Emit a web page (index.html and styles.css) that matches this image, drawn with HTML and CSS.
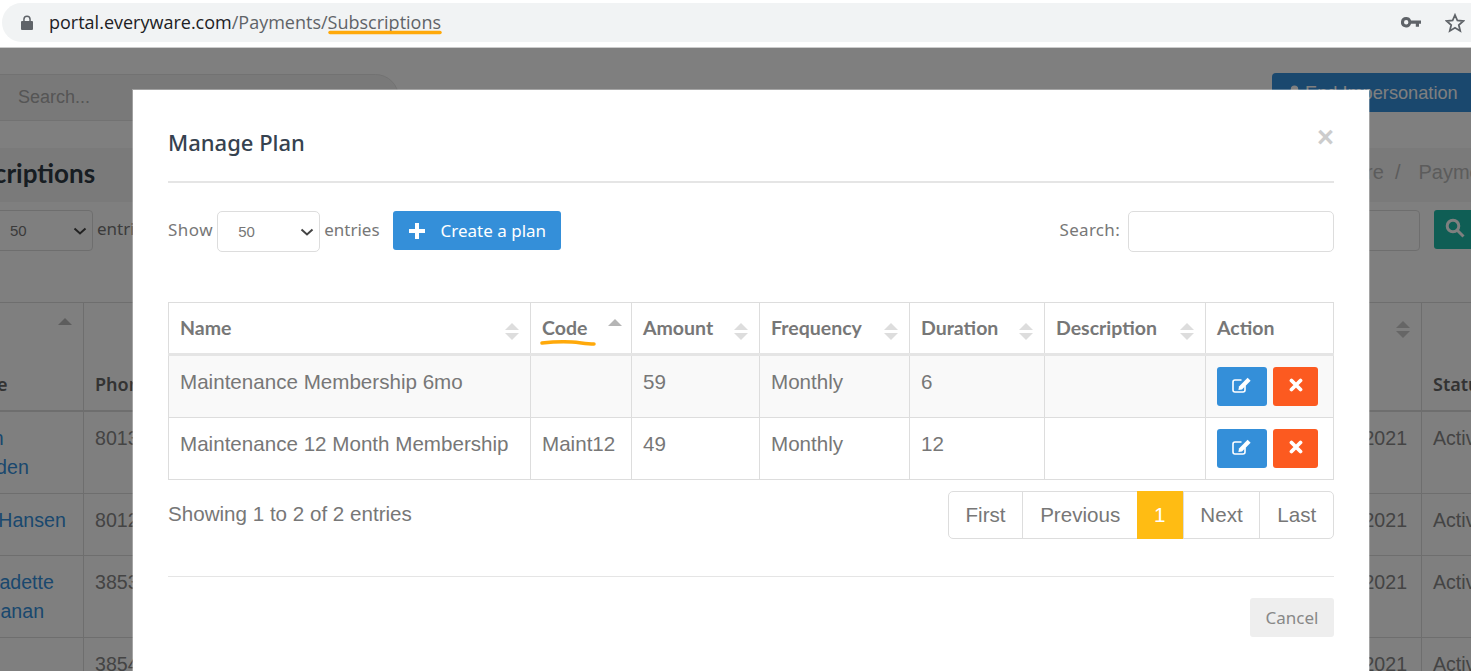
FILE: index.html
```html
<!DOCTYPE html>
<html lang="en">
<head>
    <meta charset="UTF-8">
    <meta name="viewport" content="width=device-width, initial-scale=1.0">
    <title>Manage Plan</title>
    <link rel="stylesheet" href="styles.css">
</head>
<body>
    <!-- Browser address bar -->
    <div class="browser-bar">
        <div class="address">
            <svg class="lock" viewBox="0 0 12 15"><path d="M2.2 6V4.2a3.8 3.8 0 0 1 7.6 0V6H11a1 1 0 0 1 1 1v7a1 1 0 0 1-1 1H1a1 1 0 0 1-1-1V7a1 1 0 0 1 1-1zm1.5 0h4.6V4.2a2.3 2.3 0 0 0-4.6 0z"/></svg>
            <span class="url"><span class="host">portal.everyware.com</span>/Payments/<span class="marked">Subscriptions<svg class="scribble-url" viewBox="0 0 114 5"><path d="M2 2.500h110"/></svg></span></span>
            <div class="address-icons">
                <svg class="key" viewBox="0 0 20 11"><path d="M5.200 0a5.200 5.200 0 0 1 4.900 3.400H20v3.400h-2v3h-3.200v-3h-4.700A5.200 5.200 0 1 1 5.200 0zm0 3a2.200 2.200 0 1 0 0 4.400 2.200 2.200 0 0 0 0-4.400z"/></svg>
                <svg class="star" viewBox="0 0 20 20"><path d="M10 2l2.400 5.500 6 .5-4.600 4 1.400 5.900L10 14.800l-5.200 3.100 1.400-5.900-4.600-4 6-.5z"/></svg>
            </div>
        </div>
    </div>

    <div class="viewport">
        <!-- Page behind the dialog -->
        <div class="page">
            <div class="top-row">
                <div class="site-search">Search...</div>
                <button class="end-imp">
                    <svg class="person" viewBox="0 0 14 16"><circle cx="7" cy="4" r="4"/><path d="M0 16c0-5 3-7 7-7s7 2 7 7z"/></svg>
                    <span>End Impersonation</span>
                </button>
            </div>
            <div class="title-band">
                <h2>Subscriptions</h2>
                <div class="crumbs">Everyware<i>/</i>Payments<i>/</i>Subscriptions</div>
            </div>
            <div class="page-controls">
                <div class="page-length">
                    <div class="select-wrap">
                        <select class="page-select"><option>50</option></select>
                        <svg class="chevron" viewBox="0 0 14 8"><path d="M1.500 1.500L7 6.500l5.500-5"/></svg>
                    </div>
                    <span>entries</span>
                </div>
                <div class="page-search">
                    <div class="page-input"></div>
                    <button class="go">
                        <svg viewBox="0 0 20 20"><circle cx="8" cy="8" r="5.800"/><path d="M12.500 12.500l6 6"/></svg>
                    </button>
                </div>
            </div>
            <table class="subs">
                <colgroup>
                    <col class="c-name"><col class="c-phone"><col class="c-mid"><col class="c-date"><col class="c-status">
                </colgroup>
                <thead>
                    <tr>
                        <th>Name<span class="bg-up"></span></th>
                        <th>Phone</th>
                        <th></th>
                        <th class="bg-both">Date</th>
                        <th>Status</th>
                    </tr>
                </thead>
                <tbody>
                    <tr><td><a>Ryan<br>Madden</a></td><td>8013342210</td><td></td><td>03/12/2021</td><td>Active</td></tr>
                    <tr><td><a>Ann Hansen</a></td><td>8012297614</td><td></td><td>03/18/2021</td><td>Active</td></tr>
                    <tr><td><a>Bernadette<br>McManan</a></td><td>3853401927</td><td></td><td>03/22/2021</td><td>Active</td></tr>
                    <tr><td><a>Liam</a></td><td>3854120068</td><td></td><td>03/29/2021</td><td>Active</td></tr>
                </tbody>
            </table>
        </div>

        <div class="backdrop"></div>

        <!-- Manage Plan dialog -->
        <div class="modal">
            <div class="modal-head">
                <h4>Manage Plan</h4>
                <span class="close">&times;</span>
            </div>
            <div class="tools">
                <span class="show">Show</span>
                <div class="select-wrap length-wrap">
                    <select class="length"><option>50</option></select>
                    <svg class="chevron" viewBox="0 0 14 8"><path d="M1.500 1.500L7 6.500l5.500-5"/></svg>
                </div>
                <span>entries</span>
                <button class="btn-create">
                    <svg viewBox="0 0 16 16"><path d="M6 0h4v6h6v4h-6v6H6v-6H0V6h6z"/></svg>
                    Create a plan
                </button>
                <label class="search">Search:<input type="text"></label>
            </div>
            <table class="plans">
                <colgroup>
                    <col class="p-name"><col class="p-code"><col class="p-amount"><col class="p-freq"><col class="p-dur"><col class="p-desc"><col class="p-act">
                </colgroup>
                <thead>
                    <tr>
                        <th class="sort">Name</th>
                        <th class="sort-up">Code<svg class="scribble-code" viewBox="0 0 56 7"><path d="M2 3c14-1.500 22-1.500 30-1 8 .5 14 2 22 2"/></svg></th>
                        <th class="sort">Amount</th>
                        <th class="sort">Frequency</th>
                        <th class="sort">Duration</th>
                        <th class="sort">Description</th>
                        <th>Action</th>
                    </tr>
                </thead>
                <tbody>
                    <tr class="odd">
                        <td>Maintenance Membership 6mo</td><td></td><td>59</td><td>Monthly</td><td>6</td><td></td>
                        <td class="actions">
                            <button class="btn-edit"><svg viewBox="0 0 20 16"><path class="edit-box" d="M13 8.500V13a2 2 0 0 1-2 2H3a2 2 0 0 1-2-2V5a2 2 0 0 1 2-2h6.500"/><path d="M15.600.800l3 3L10 12.400l-3.600.600.600-3.600z"/></svg></button>
                            <button class="btn-del"><svg viewBox="0 0 14 14"><path d="M2.500 2.500l9 9m0-9l-9 9"/></svg></button>
                        </td>
                    </tr>
                    <tr>
                        <td>Maintenance 12 Month Membership</td><td>Maint12</td><td>49</td><td>Monthly</td><td>12</td><td></td>
                        <td class="actions">
                            <button class="btn-edit"><svg viewBox="0 0 20 16"><path class="edit-box" d="M13 8.500V13a2 2 0 0 1-2 2H3a2 2 0 0 1-2-2V5a2 2 0 0 1 2-2h6.500"/><path d="M15.600.800l3 3L10 12.400l-3.600.600.600-3.600z"/></svg></button>
                            <button class="btn-del"><svg viewBox="0 0 14 14"><path d="M2.500 2.500l9 9m0-9l-9 9"/></svg></button>
                        </td>
                    </tr>
                </tbody>
            </table>
            <div class="table-foot">
                <div class="info">Showing 1 to 2 of 2 entries</div>
                <div class="pager">
                    <a>First</a><a>Previous</a><a class="active">1</a><a>Next</a><a>Last</a>
                </div>
            </div>
            <div class="modal-foot">
                <button class="btn-cancel">Cancel</button>
            </div>
        </div>
    </div>
</body>
</html>
```

FILE: styles.css
```css
html, body {
    margin: 0;
    height: 671px;
    overflow: hidden;
}

body {
    font-family: "Liberation Sans", Arial, sans-serif;
    background-color: white;
    color: #777;
}

button {
    border: none;
    font-family: inherit;
}

/* Browser bar */
.browser-bar {
    height: 48px;
    padding: 3px 0 0 2px;
    box-sizing: border-box;
    background-color: white;
    border-bottom: 1px solid #ccc;
}

.address {
    display: flex;
    align-items: center;
    height: 39px;
    padding-left: 19px;
    background-color: #f1f3f4;
    border-radius: 20px 0 0 20px;
}

.lock {
    width: 12px;
    height: 15px;
    fill: #5f6368;
}

.url {
    margin: -2px 0 0 16px;
    font-family: "Open Sans", sans-serif;
    font-size: 18px;
    color: #5f6368;
}

.host {
    color: #202124;
}

.marked {
    position: relative;
}

.scribble-url {
    position: absolute;
    left: 0;
    top: 20px;
    width: 114px;
    height: 5px;
}

.scribble-url path, .scribble-code path {
    fill: none;
    stroke: #ffa90a;
    stroke-width: 3.500;
    stroke-linecap: round;
}

.address-icons {
    display: flex;
    align-items: center;
    gap: 24px;
    margin-left: auto;
    padding-right: 6px;
}

.key {
    width: 20px;
    height: 11px;
    fill: #5f6368;
}

.star {
    width: 20px;
    height: 20px;
    fill: none;
    stroke: #5f6368;
    stroke-width: 1.800;
}

/* Page behind the dialog */
.viewport {
    position: relative;
    height: 623px;
    overflow: hidden;
}

.page {
    width: 1800px;
    margin-left: -100px;
    background-color: white;
}

.top-row {
    display: flex;
    justify-content: space-between;
    align-items: flex-start;
    height: 100px;
    box-sizing: border-box;
    padding-top: 26px;
}

.site-search {
    width: 480px;
    height: 47px;
    margin-left: 19px;
    padding-left: 98px;
    box-sizing: border-box;
    background-color: #f3f3f3;
    border: 1px solid #e4e4e4;
    border-radius: 24px;
    font-size: 18px;
    line-height: 45px;
    color: #aaa;
}

.end-imp {
    display: flex;
    align-items: center;
    gap: 4px;
    width: 428px;
    height: 39px;
    margin-top: -1px;
    padding-left: 16px;
    background-color: #3490dc;
    color: white;
    font-size: 18.200px;
    border-radius: 4px 0 0 4px;
}

.end-imp span {
    padding-top: 2px;
}

.person {
    width: 13px;
    height: 16px;
    fill: white;
}

.title-band {
    display: flex;
    justify-content: space-between;
    align-items: center;
    height: 54px;
    box-sizing: border-box;
    padding: 0 38px 5px 39px;
    background-color: #f5f5f5;
}

.title-band h2 {
    margin: 0;
    font-family: "Lato", sans-serif;
    font-size: 26px;
    font-weight: 700;
    color: #2f3a45;
}

.crumbs {
    font-size: 20px;
    color: #b8b8b8;
}

.crumbs i {
    font-style: normal;
    margin: 0 18px 0 11px;
}

.page-controls {
    display: flex;
    justify-content: space-between;
    height: 100px;
    padding: 8px 200px 0 0;
    box-sizing: border-box;
}

.page-length {
    display: flex;
    align-items: flex-start;
    gap: 4px;
    font-family: "Noto Sans", sans-serif;
    font-size: 17px;
    line-height: 38px;
    color: #777;
}

.select-wrap {
    position: relative;
    display: inline-block;
    height: 41px;
}

.chevron {
    position: absolute;
    right: 6px;
    top: 17px;
    width: 14px;
    height: 8px;
    fill: none;
    stroke: #444;
    stroke-width: 2;
}

.page-select {
    display: block;
    width: 193px;
    height: 41px;
    padding-left: 109px;
    background-color: white;
    border: 1px solid #ddd;
    border-radius: 4px;
    font-size: 15px;
    color: #777;
    appearance: none;
}

.page-search {
    display: flex;
    gap: 14px;
}

.page-input {
    width: 200px;
    height: 39px;
    border: 1px solid #ddd;
    border-radius: 4px;
}

.go {
    width: 66px;
    height: 39px;
    padding: 0 0 0 11px;
    text-align: left;
    background-color: #1ebcaa;
    border-radius: 3px;
}

.go svg {
    width: 20px;
    height: 20px;
    fill: none;
    stroke: white;
    stroke-width: 3;
}

.subs {
    table-layout: fixed;
    border-collapse: collapse;
    width: 1700px;
    font-size: 19.600px;
    color: #888;
}

.c-name { width: 183px; }
.c-phone { width: 200px; }
.c-mid { width: 1014px; }
.c-date { width: 124px; }
.c-status { width: 179px; }

.subs th, .subs td {
    position: relative;
    padding: 12px 11px 11px;
    border: 1px solid #ddd;
    vertical-align: top;
    text-align: left;
    line-height: 29px;
    height: 38px;
}

.subs th {
    height: 84px;
    padding-bottom: 11px;
    vertical-align: bottom;
    border-bottom: 2px solid #ddd;
    font-family: "Noto Sans", sans-serif;
    font-size: 18px;
    font-weight: 600;
    color: #666;
}

.subs a {
    display: block;
    padding-left: 46px;
    color: #3490dc;
    white-space: nowrap;
}

.subs th:first-child {
    padding-left: 54px;
}

.bg-up {
    position: absolute;
    right: 11px;
    top: 15px;
    border: 7px solid transparent;
    border-top-width: 0;
    border-bottom: 7px solid #bbb;
}

.bg-both::before, .bg-both::after {
    content: "";
    position: absolute;
    right: 11px;
    border-left: 7px solid transparent;
    border-right: 7px solid transparent;
}

.bg-both::before {
    top: 18px;
    border-bottom: 7px solid #ccc;
}

.bg-both::after {
    top: 28px;
    border-top: 7px solid #ccc;
}

.backdrop {
    position: absolute;
    left: 0;
    top: 0;
    right: 0;
    bottom: 0;
    background-color: rgba(0, 0, 0, 0.5);
}

/* Dialog */
.modal {
    position: absolute;
    left: 133px;
    top: 42px;
    width: 1236px;
    height: 620px;
    padding: 0 35px;
    box-sizing: border-box;
    background-color: white;
    box-shadow: 0 0 0 1px rgba(255, 255, 255, 0.3);
}

.modal-head {
    display: flex;
    justify-content: space-between;
    align-items: center;
    height: 93px;
    box-sizing: border-box;
    padding-top: 13px;
    border-bottom: 2px solid #e5e5e5;
}

.modal-head h4 {
    margin: 0;
    font-family: "Noto Sans", sans-serif;
    font-size: 22px;
    font-weight: 500;
    color: #36424f;
}

.close {
    margin: -10px 0 0 0;
    font-size: 29px;
    font-weight: bold;
    color: #ccc;
}

.tools {
    display: flex;
    align-items: flex-start;
    height: 41px;
    margin-top: 28px;
    font-family: "Noto Sans", sans-serif;
    font-size: 17px;
    line-height: 37px;
    color: #777;
}

.show {
    letter-spacing: 0.5px;
}

.length-wrap {
    margin: 0 4px;
}

.length {
    display: block;
    width: 103px;
    height: 41px;
    padding-left: 20px;
    background-color: white;
    border: 1px solid #ddd;
    border-radius: 5px;
    font-size: 15px;
    color: #777;
    appearance: none;
}

.btn-create {
    display: flex;
    align-items: center;
    gap: 16px;
    width: 168px;
    height: 39px;
    margin-left: 13px;
    padding-left: 16px;
    background-color: #348fd9;
    border-radius: 3px;
    color: white;
    font-family: "Noto Sans", sans-serif;
    font-size: 17px;
}

.btn-create svg {
    width: 16px;
    height: 16px;
    fill: white;
}

.search {
    display: flex;
    gap: 8px;
    margin-left: auto;
    letter-spacing: 0.3px;
}

.search input {
    width: 206px;
    height: 41px;
    padding: 0;
    box-sizing: border-box;
    border: 1px solid #ddd;
    border-radius: 5px;
}

.plans {
    table-layout: fixed;
    border-collapse: collapse;
    width: 1165px;
    margin-top: 50px;
    font-size: 20.600px;
    color: #777;
}

.p-name { width: 362px; }
.p-code { width: 101px; }
.p-amount { width: 128px; }
.p-freq { width: 150px; }
.p-dur { width: 135px; }
.p-desc { width: 161px; }
.p-act { width: 128px; }

.plans th, .plans td {
    padding: 0 11px;
    border: 1px solid #ddd;
    text-align: left;
}

.plans th {
    position: relative;
    padding-bottom: 2px;
    box-sizing: border-box;
    height: 52px;
    border-bottom: 3px solid #e5e5e5;
    font-family: "Lato", sans-serif;
    font-size: 19.500px;
    font-weight: 700;
}

.plans td {
    height: 62px;
    padding-bottom: 9px;
    box-sizing: border-box;
}

.plans .odd td {
    height: 63px;
    background-color: #f9f9f9;
}

.sort::before, .sort::after, .sort-up::before {
    content: "";
    position: absolute;
    right: 11px;
    border-left: 7px solid transparent;
    border-right: 7px solid transparent;
}

.sort::before {
    top: 20px;
    border-bottom: 7px solid #ddd;
}

.sort::after {
    top: 30px;
    border-top: 7px solid #ddd;
}

.sort-up::before {
    right: 9px;
    top: 16px;
    border-bottom: 7px solid #b5b5b5;
}

.scribble-code {
    position: absolute;
    left: 9px;
    top: 37px;
    width: 56px;
    height: 7px;
}

.plans td.actions {
    padding: 0 0 0 11px;
    font-size: 0;
}

.btn-edit, .btn-del {
    height: 39px;
    padding: 0;
    border-radius: 3px;
    vertical-align: middle;
}

.btn-edit {
    width: 50px;
    background-color: #348fd9;
}

.btn-del {
    width: 45px;
    margin-left: 6px;
    background-color: #fc5a20;
}

.btn-edit svg {
    width: 20px;
    height: 16px;
    fill: white;
}

.edit-box {
    fill: none;
    stroke: white;
    stroke-width: 1.600;
}

.btn-del svg {
    width: 14px;
    height: 14px;
    fill: none;
    stroke: white;
    stroke-width: 3.800;
    stroke-linecap: round;
}

.table-foot {
    display: flex;
    justify-content: space-between;
    align-items: flex-start;
    margin-top: 11px;
}

.info {
    padding-top: 11px;
    font-size: 20.600px;
}

.pager {
    display: flex;
    height: 48px;
    box-sizing: border-box;
    border: 1px solid #ddd;
    border-radius: 5px;
    font-size: 20.600px;
    line-height: 46px;
}

.pager a {
    padding: 0 16.800px;
    border-left: 1px solid #ddd;
}

.pager a:first-child {
    border-left: none;
}

.pager a.active {
    margin: -1px 0;
    padding: 1px 17px;
    background-color: #ffbc13;
    border-left: none;
    color: white;
}

.modal-foot {
    display: flex;
    justify-content: flex-end;
    height: 61px;
    margin-top: 37px;
    padding-top: 21px;
    box-sizing: border-box;
    border-top: 1px solid #e5e5e5;
}

.btn-cancel {
    width: 84px;
    height: 39px;
    background-color: #eee;
    border-radius: 3px;
    color: #888;
    font-family: "Noto Sans", sans-serif;
    font-size: 17px;
}
```
